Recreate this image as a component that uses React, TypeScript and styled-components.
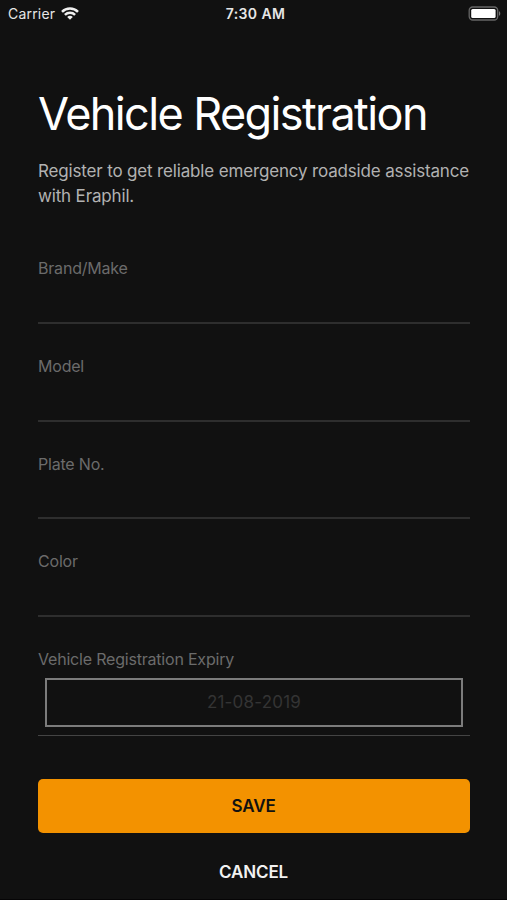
import React from "react";
import styled, { createGlobalStyle } from "styled-components";

const GlobalStyle = createGlobalStyle`
  * { box-sizing: border-box; }
  body {
    margin: 0;
    background: #111111;
    font-family: Inter, "Liberation Sans", sans-serif;
    overflow: hidden;
  }
`;

const Screen = styled.div`
  display: flex;
  flex-direction: column;
  width: 507px;
  height: 900px;
  background: #111111;
  border-bottom: 1px solid #060506;
  color: #ffffff;
`;

const StatusBar = styled.header`
  display: grid;
  grid-template-columns: 1fr auto 1fr;
  align-items: center;
  height: 27px;
  padding: 0 6px 0 8px;
  color: #e6e6e6;
  font-size: 14px;
`;

const CarrierGroup = styled.div`
  display: flex;
  align-items: center;
  gap: 6px;
  letter-spacing: 0.2px;
`;

const Clock = styled.time`
  font-weight: 600;
  letter-spacing: 0.4px;
  padding-left: 2px;
`;

const BatteryIcon = styled.svg`
  justify-self: end;
`;

const Content = styled.main`
  display: flex;
  flex-direction: column;
  padding: 59px 37px 0 38px;
`;

const Title = styled.h1`
  margin: 0;
  font-size: 45px;
  font-weight: 400;
  line-height: 56px;
  letter-spacing: -1.6px;
  white-space: nowrap;
`;

const Intro = styled.p`
  margin: 17px 0 0;
  color: #b2b2b2;
  font-size: 17px;
  line-height: 24.5px;
  letter-spacing: -0.16px;
  white-space: nowrap;
`;

const Form = styled.form`
  display: flex;
  flex-direction: column;
  gap: 32px;
  margin-top: 50px;
`;

const Field = styled.label<{ $height: number; $line?: string }>`
  display: flex;
  flex-direction: column;
  height: ${(p) => p.$height}px;
  border-bottom: ${(p) => p.$line ?? "2px solid #2e2e2e"};
`;

const FieldLabel = styled.span`
  color: #6b6b6b;
  font-size: 16px;
  line-height: 20px;
  letter-spacing: -0.2px;
`;

const TextInput = styled.input`
  flex: 1;
  min-height: 0;
  border: 0;
  padding: 0;
  outline: none;
  background: transparent;
  color: #ffffff;
  font: inherit;
`;

const DateBox = styled.div`
  display: flex;
  align-items: center;
  justify-content: center;
  height: 49px;
  margin: 9px 7px 0;
  padding-bottom: 1px;
  border: 2px solid #7c7c7c;
  color: #343434;
  font-size: 17px;
  letter-spacing: 0.2px;
`;

const Actions = styled.div`
  display: flex;
  flex-direction: column;
  gap: 17px;
  margin-top: 11px;
`;

const Button = styled.button<{ $primary?: boolean }>`
  height: ${(p) => (p.$primary ? 54 : 44)}px;
  padding: 0 1px 0 0;
  border: 0;
  border-radius: 5px;
  background: ${(p) => (p.$primary ? "#f39200" : "transparent")};
  color: ${(p) => (p.$primary ? "#111111" : "#f2f2f2")};
  font-family: inherit;
  font-size: 17px;
  font-weight: 600;
  letter-spacing: -0.1px;
`;

const fields = ["Brand/Make", "Model", "Plate No.", "Color"];

export default function App() {
  return (
    <>
      <GlobalStyle />
      <Screen>
        <StatusBar>
          <CarrierGroup>
            <span>Carrier</span>
            <svg width="18" height="13" viewBox="0 0 18 13" aria-hidden="true">
              <g fill="none" stroke="#f0f0f0" strokeWidth="2.5">
                <path d="M1 4.8C5.4.4 12.6.4 17 4.8" />
                <path d="M3.9 7.8c2.9-2.8 7.3-2.8 10.2 0" />
              </g>
              <path d="M6.2 9.9c1.6-1.4 4-1.4 5.6 0L9 12.8z" fill="#f0f0f0" />
            </svg>
          </CarrierGroup>
          <Clock>7:30 AM</Clock>
          <BatteryIcon width="33" height="15" viewBox="0 0 33 15" aria-hidden="true">
            <rect x="1.2" y="1" width="28.5" height="13" rx="3.5" fill="none" stroke="#666" strokeWidth="1.3" />
            <rect x="3.2" y="3" width="24.4" height="9" rx="1.5" fill="#fff" />
            <path d="M31 5.2c1.7.7 1.7 3.9 0 4.6z" fill="#777" />
          </BatteryIcon>
        </StatusBar>
        <Content>
          <Title>Vehicle Registration</Title>
          <Intro>
            Register to get reliable emergency roadside assistance
            <br />
            with Eraphil.
          </Intro>
          <Form onSubmit={(e) => e.preventDefault()}>
            {fields.map((name) => (
              <Field key={name} $height={65.75}>
                <FieldLabel>{name}</FieldLabel>
                <TextInput aria-label={name} />
              </Field>
            ))}
            <Field as="div" $height={87} $line="1px solid #444444">
              <FieldLabel>Vehicle Registration Expiry</FieldLabel>
              <DateBox>21-08-2019</DateBox>
            </Field>
            <Actions>
              <Button type="submit" $primary>SAVE</Button>
              <Button type="button">CANCEL</Button>
            </Actions>
          </Form>
        </Content>
      </Screen>
    </>
  );
}
